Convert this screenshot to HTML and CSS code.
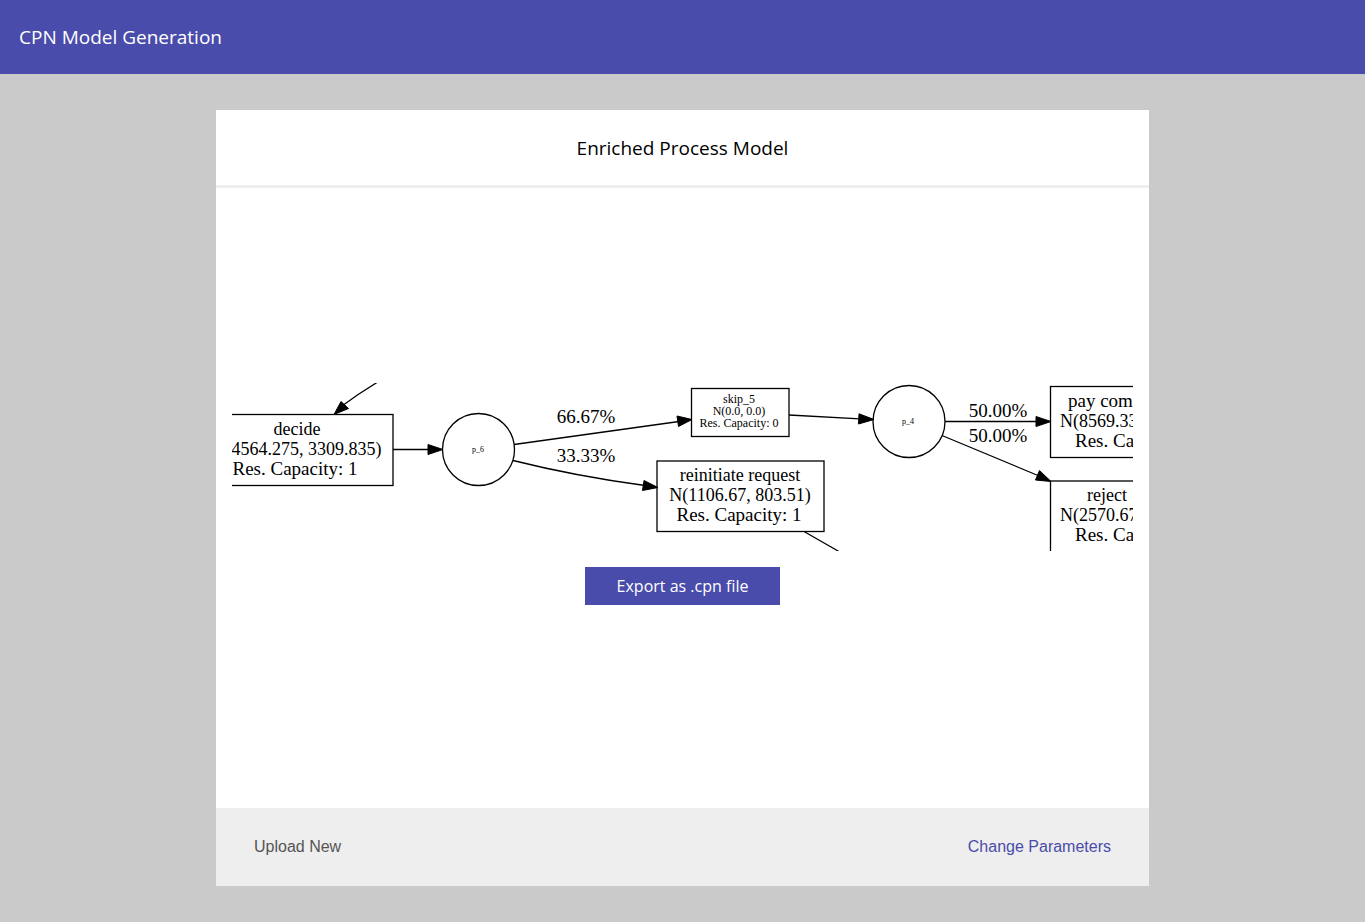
FILE: index.html
```html
<!DOCTYPE html>
<html lang="en">
<head>
<meta charset="utf-8">
<title>CPN Model Generation</title>
<link rel="stylesheet" href="styles.css">
</head>
<body>
<header class="topbar"><h1 class="topbar-title">CPN Model Generation</h1></header>
<main class="page">
  <section class="card">
    <header class="card-header"><h2 class="card-title">Enriched Process Model</h2></header>
    <div class="card-body">
      <svg class="model" viewBox="232 383 901 168" role="img" aria-label="Enriched process model">
        <g class="edges">
          <path d="M377 382.500Q358 394 342 406"/>
          <path d="M393 449.500H430"/>
          <path d="M514 444.500L679 421.500"/>
          <path d="M513 460.500C555 471 600 479.500 645 485.500"/>
          <path d="M789 415L860 418.800"/>
          <path d="M945 421.500H1038"/>
          <path d="M942 435.500L1038 475.500"/>
          <path d="M804 531.500L839 551.500"/>
        </g>
        <g class="arrows">
          <path d="M334 414.500L341 401.500L348.500 408.500Z"/>
          <path d="M443 449.500L428 444.500V454.500Z"/>
          <path d="M692 419.500L677 416L678.500 426.500Z"/>
          <path d="M658 487.500L644 480.500L642.500 490.500Z"/>
          <path d="M874 419.500L859 413.800L858.500 424Z"/>
          <path d="M1051 421.500L1036 416.500V426.500Z"/>
          <path d="M1051 481.500L1039.500 470.500L1035.500 480Z"/>
        </g>
        <g class="nodes">
          <rect x="200" y="414.500" width="193" height="71"/>
          <circle cx="478.500" cy="449.500" r="36"/>
          <rect x="691.500" y="388.500" width="97.500" height="48"/>
          <rect x="657" y="461" width="167" height="70.500"/>
          <circle cx="909" cy="421.500" r="36"/>
          <rect x="1050.500" y="386.500" width="180" height="71"/>
          <rect x="1050.500" y="481" width="180" height="71"/>
        </g>
        <g class="label">
          <text x="297" y="435">decide</text>
          <text x="297" y="455">N(4564.275, 3309.835)</text>
          <text class="value" x="295" y="475">Res. Capacity: 1</text>
          <text class="value" x="586" y="423">66.67%</text>
          <text class="value" x="586" y="462">33.33%</text>
          <text x="740" y="481">reinitiate request</text>
          <text x="740" y="501">N(1106.67, 803.51)</text>
          <text class="value" x="739" y="521">Res. Capacity: 1</text>
          <text class="value" x="998" y="417">50.00%</text>
          <text class="value" x="998" y="442">50.00%</text>
        </g>
        <g class="label start">
          <text class="value" x="1068" y="407">pay com</text>
          <text x="1060" y="427">N(8569.33</text>
          <text class="value" x="1075" y="447">Res. Ca</text>
          <text x="1087" y="501">reject</text>
          <text x="1060" y="521">N(2570.67</text>
          <text class="value" x="1075" y="541">Res. Ca</text>
        </g>
        <g class="label small">
          <text x="739" y="403">skip_5</text>
          <text x="739" y="415">N(0.0, 0.0)</text>
          <text x="739" y="427">Res. Capacity: 0</text>
        </g>
        <g class="label tiny">
          <text x="478" y="452">p_6</text>
          <text x="908" y="424">p_4</text>
        </g>
      </svg>
      <button class="export" type="button">Export as .cpn file</button>
    </div>
    <footer class="card-footer">
      <a class="link muted" href="#">Upload New</a>
      <a class="link" href="#">Change Parameters</a>
    </footer>
  </section>
</main>
</body>
</html>
```
FILE: styles.css
```css
* { box-sizing: border-box; }
body {
  margin: 0;
  min-height: 100vh;
  display: flex;
  flex-direction: column;
  background: #cacaca;
  font-family: "Open Sans", sans-serif;
}
.topbar {
  background: #494caa;
  color: #fff;
  padding: 24px 19px;
}
.topbar-title, .card-title {
  margin: 0;
  font-size: 19px;
  line-height: 26px;
  font-weight: 400;
}
.page {
  flex: 1;
  display: flex;
  padding: 36px 216px;
}
.card {
  flex: 1;
  min-width: 0;
  display: flex;
  flex-direction: column;
  background: #fff;
}
.card-header {
  padding: 25px 16px 24px;
  border-bottom: 3px solid #eee;
  text-align: center;
}
.card-title { color: #000; }
.card-body {
  flex: 1;
  display: flex;
  flex-direction: column;
  align-items: center;
  justify-content: center;
  gap: 16px;
  padding: 16px 16px 24px;
}
.model {
  display: block;
  width: 100%;
  height: auto;
}
.edges, .nodes {
  fill: none;
  stroke: #000;
  stroke-width: 1.3;
}
.arrows {
  fill: #000;
  stroke: #000;
  stroke-width: 1;
}
.label {
  font-family: "Liberation Serif", serif;
  font-size: 18px;
  text-anchor: middle;
}
.value { font-size: 19px; }
.start { text-anchor: start; }
.small { font-size: 12px; }
.tiny { font-size: 8px; }
.export {
  border: 0;
  padding: 8px 32px;
  background: #494caa;
  color: #fff;
  font-family: inherit;
  font-size: 16px;
  line-height: 22px;
}
.card-footer {
  display: flex;
  justify-content: space-between;
  padding: 28px 38px;
  background: #eee;
}
.link {
  color: #494caa;
  font-family: "Liberation Sans", Arial, sans-serif;
  font-size: 16px;
  line-height: 22px;
  text-decoration: none;
}
.muted { color: #555; }
```
